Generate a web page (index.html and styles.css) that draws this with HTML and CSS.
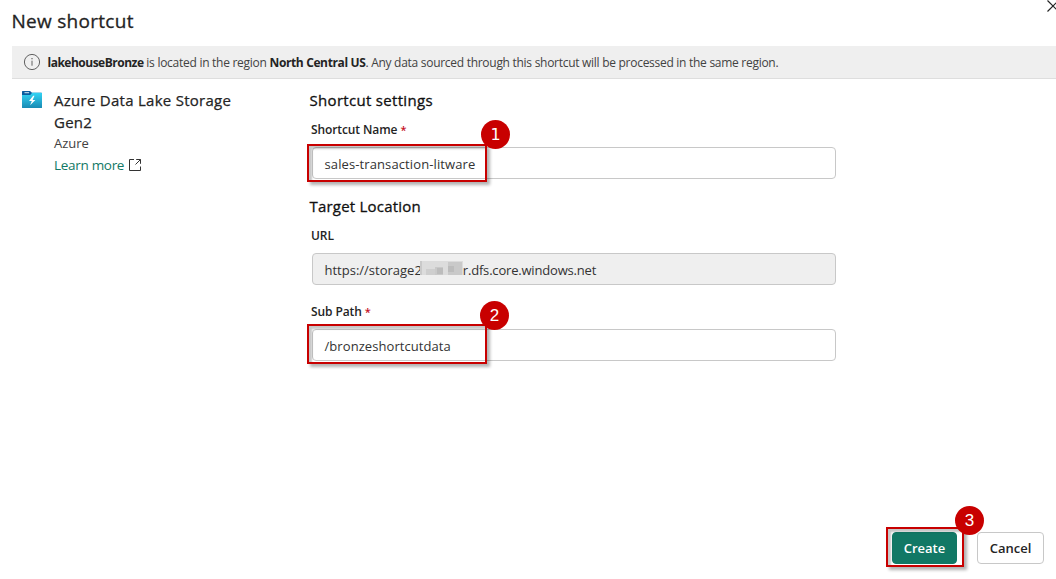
FILE: index.html
```html
<!DOCTYPE html>
<html lang="en">
<head>
<meta charset="utf-8">
<title>New shortcut</title>
<link rel="stylesheet" href="styles.css">
</head>
<body>
<div class="dialog">
  <header class="header">
    <h1 class="title"><span>New shortcut</span></h1>
    <button class="close" aria-label="Close"><svg width="12" height="12" viewBox="0 0 12 12"><path d="M.5.5l11 11M11.5.5l-11 11" stroke="#242424" stroke-width="1.2" fill="none"/></svg></button>
  </header>
  <div class="banner">
    <svg class="info" width="18" height="18" viewBox="0 0 18 18" fill="none" stroke="#616161"><circle cx="9" cy="9" r="7.6"/><path d="M9 7.7v5"/><path d="M9 5v1.3" stroke-width="1.2"/></svg>
    <p class="banner-text"><b class="b1">lakehouseBronze</b> <span class="t1">is located in the region</span> <b class="b2">North Central US</b><span class="t2">. Any data sourced through this shortcut will be processed in the same region.</span></p>
  </div>
  <main class="body">
    <aside class="source">
      <svg class="folder" width="20" height="17" viewBox="0 0 20 17">
        <defs><linearGradient id="g" x1="0" y1="0" x2="0" y2="1"><stop offset="0" stop-color="#32d4f5"/><stop offset="1" stop-color="#198ab3"/></linearGradient></defs>
        <path d="M0 .6Q0 0 .6 0H8l2 1.8h9.4q.6 0 .6.6V5H0z" fill="#0a5c9e"/>
        <path d="M2.5 1.2h4.6v1H2.5z" fill="#d5e9f5"/>
        <path d="M0 4h8.2l2-2.2h9.2q.6 0 .6.6v14q0 .6-.6.6H.6q-.6 0-.6-.6z" fill="url(#g)"/>
        <path d="M11.2 4.8L7 10h2.8l-1.7 4.3L13.4 9h-2.8l1.9-4.2z" fill="#fff"/>
      </svg>
      <div class="source-info">
        <h2 class="source-name">Azure Data Lake Storage<br>Gen2</h2>
        <p class="vendor">Azure</p>
        <a class="learn"><span>Learn more</span><svg width="12" height="12" viewBox="0 0 12 12" fill="none" stroke="#333" stroke-width="1"><path d="M5 .5H.5v11h11v-4M7.2.5h4.3v4.3M11.5.5L6.5 5.5"/></svg></a>
      </div>
    </aside>
    <form class="form">
      <h2 class="section s1">Shortcut settings</h2>
      <label class="label l1"><span>Shortcut Name</span> <i>*</i></label>
      <div class="field"><span class="v1">sales-transaction-litware</span><div class="mark"></div><b class="badge n1">1</b></div>
      <h2 class="section s2">Target Location</h2>
      <label class="label l2"><span>URL</span></label>
      <div class="field disabled"><span class="v2">https://storage2</span>
        <svg class="redact" width="43" height="14" viewBox="0 0 43 14"><path fill="#dcdcdc" d="M0 0h43v14H0z"/><path fill="#c9c9c9" d="M0 0h2v14H0zM15 6h8v8h-8zM28 1h14v13H28z"/><path fill="#bcbcbc" d="M17 7h6v6h-6zM28 5h6v6h-6z"/><path fill="#cecece" d="M6 8h9v6H6z"/></svg>
        <span class="v3">r.dfs.core.windows.net</span></div>
      <label class="label l3"><span>Sub Path</span> <i>*</i></label>
      <div class="field"><span class="v4">/bronzeshortcutdata</span><div class="mark mark2"></div><b class="badge n2">2</b></div>
    </form>
  </main>
  <footer class="footer">
    <button class="btn primary"><span>Create</span><div class="mark mark3"></div><b class="badge n3">3</b></button>
    <button class="btn"><span>Cancel</span></button>
  </footer>
</div>
</body>
</html>
```
FILE: styles.css
```css
* { box-sizing: border-box; margin: 0; padding: 0; }
body { width: 1056px; height: 579px; overflow: hidden; background: #fff; color: #242424; font-family: "Open Sans", "Noto Sans", sans-serif; font-size: 13px; }
.dialog { display: flex; flex-direction: column; height: 579px; white-space: nowrap; }
.header { display: flex; justify-content: space-between; height: 46px; padding-left: 11.5px; overflow: hidden; }
.title { font-size: 19px; font-weight: 400; line-height: 42px; letter-spacing: .28px; -webkit-text-stroke: .3px #242424; }
.close { width: 10px; height: 12px; border: 0; background: none; overflow: hidden; text-align: left; line-height: 0; margin-right: -1px; }
.close svg { display: block; }
.banner { display: flex; align-items: center; height: 33px; margin-left: 12px; padding-left: 11px; background: #efefef; border-bottom: 1px solid #dedede; }
.info { flex: none; margin-right: 6.5px; }
.banner-text { padding-top: 2px; font-size: 12px; line-height: 30px; letter-spacing: -.27px; color: #424242; }
.banner-text b { color: #242424; }
.banner-text .b1 { letter-spacing: -.5px; }
.banner-text .b2 { letter-spacing: -.37px; }
.banner-text .t2 { letter-spacing: -.28px; }
.body { display: flex; flex: 1; }
.source { display: flex; width: 310px; padding: 12px 0 0 22px; gap: 12px; }
.folder { flex: none; }
.source-name { font-size: 15px; line-height: 22px; font-weight: 400; margin-top: -2px; letter-spacing: .27px; -webkit-text-stroke: .25px #242424; }
.vendor { line-height: 20px; color: #424242; }
.learn { display: flex; align-items: center; gap: 5px; margin-top: 1px; line-height: 22px; color: #117865; font-size: 13.5px; letter-spacing: -.3px; }
.form { width: 526px; padding-top: 9px; }
.section { font-size: 15px; line-height: 24px; font-weight: 400; letter-spacing: .31px; color: #111; -webkit-text-stroke: .3px #111; margin-left: -.5px; }
.label { display: block; margin-left: 1px; font-size: 12px; font-weight: 600; line-height: 18px; letter-spacing: -.1px; }
.label i { color: #c50f1f; font-style: normal; font-size: 11px; }
.l1 { margin-top: 9px; }
.field { position: relative; display: flex; align-items: center; height: 32px; margin: 8px 0 0 2px; padding: 2px 0 0 11.5px; border: 1px solid #c8c8c8; border-radius: 4px; font-size: 13px; color: #333; }
.disabled { background: #efefef; }
.s2 { margin-top: 15px; letter-spacing: .21px; }
.l2 { margin-top: 9px; }
.l3 { margin-top: 18px; }
.v1 { letter-spacing: .11px; }
.v3 { letter-spacing: -.19px; }
.v4 { letter-spacing: .07px; }
.redact { margin: -4px 0 0 -2px; filter: blur(.4px); }
.mark { position: absolute; left: -6px; top: -4px; width: 180px; height: 38px; border: 2px solid #c80000; box-shadow: 3px 3px 3px rgba(0,0,0,.3), inset 3px 3px 2px rgba(0,0,0,.22); }
.mark2 { top: -6px; height: 40px; }
.badge { position: absolute; width: 29px; height: 29px; border-radius: 50%; background: #c80000; color: #fff; font: 17px/29px "Liberation Sans", Arial, sans-serif; text-align: center; letter-spacing: 0; }
.n1 { left: 168px; top: -28px; font: 16px/29px "DejaVu Sans", sans-serif; }
.n2 { left: 167px; top: -29px; }
.footer { display: flex; justify-content: flex-end; gap: 20px; height: 47px; padding-right: 12px; }
.btn { position: relative; width: 67px; height: 32px; background: #fff; border: 1px solid #c8c8c8; border-radius: 4px; color: #242424; font: 600 13px/30px "Open Sans", sans-serif; }
.primary { width: 65px; background: #117865; border-color: #117865; color: #fff; }
.mark3 { left: -7px; top: -6px; width: 78px; height: 40px; box-shadow: 3px 3px 3px rgba(0,0,0,.3), inset 3px 3px 2px rgba(0,0,0,.22); }
.n3 { left: 62px; top: -27px; }
```
